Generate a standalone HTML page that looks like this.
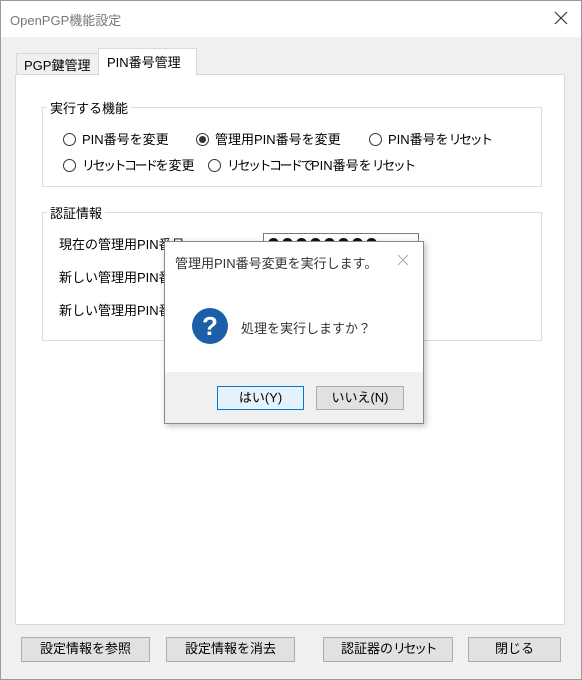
<!DOCTYPE html>
<html><head><meta charset="utf-8"><style>
*{box-sizing:border-box;margin:0;padding:0}
body{width:582px;height:680px;overflow:hidden;background:#f0f0f0;font-family:"Liberation Sans","Noto Sans CJK JP",sans-serif;font-size:13px;color:#000;position:relative}
.a{position:absolute}
.win{left:0;top:0;width:582px;height:680px;border:1px solid #9a9a9a}
.title{left:1px;top:1px;width:580px;height:36px;background:#fff}
.tt{left:10px;top:10px;color:#777;font-size:13px}
.grp{border:1px solid #dcdcdc;background:#fff}
.lg{background:#fff;padding:0 3px;font-size:13px}
.rb{display:inline-block;width:13px;height:13px;border:1px solid #333;border-radius:50%;vertical-align:-2px;margin-right:6px;position:relative;background:#fff}
.rb.on::after{content:"";position:absolute;left:2px;top:2px;width:7px;height:7px;border-radius:50%;background:#333}
.btn{border:1px solid #adadad;background:#e1e1e1;text-align:center;line-height:22px;font-size:13px}
.k{letter-spacing:-2.5px}
.dot{position:absolute;top:4px;width:11px;height:11px;border-radius:50%;background:#111}
</style></head><body>
<div class="a win"></div>
<div class="a title"></div>
<div class="a tt">OpenPGP機能設定</div>
<svg class="a" style="left:554px;top:11px" width="14" height="14"><path d="M1 1L13 13M13 1L1 13" stroke="#333" stroke-width="1.2"/></svg>
<!-- tabs -->
<div class="a" style="left:16px;top:53px;width:83px;height:22px;border:1px solid #d9d9d9;border-bottom:none;background:#f0f0f0"></div>
<div class="a" style="left:24px;top:55px">PGP鍵管理</div>
<div class="a" style="left:15px;top:74px;width:550px;height:551px;background:#fff;border:1px solid #d9d9d9"></div>
<div class="a" style="left:98px;top:48px;width:99px;height:28px;background:#fff;border:1px solid #d9d9d9;border-bottom:none"></div>
<div class="a" style="left:107px;top:52px">PIN番号管理</div>
<!-- group1 -->
<div class="a grp" style="left:42px;top:107px;width:500px;height:80px"></div>
<div class="a lg" style="left:47px;top:98px">実行する機能</div>
<div class="a" style="left:63px;top:129px"><span class="rb"></span>PIN番号を変更</div>
<div class="a" style="left:196px;top:129px"><span class="rb on"></span>管理用PIN番号を変更</div>
<div class="a" style="left:369px;top:129px"><span class="rb"></span>PIN番号を<span class="k">リセット</span></div>
<div class="a" style="left:63px;top:155px"><span class="rb"></span><span class="k">リセットコード</span>を変更</div>
<div class="a" style="left:208px;top:155px"><span class="rb"></span><span class="k">リセットコードで</span>PIN番号を<span class="k">リセット</span></div>
<!-- group2 -->
<div class="a grp" style="left:42px;top:212px;width:500px;height:129px"></div>
<div class="a lg" style="left:47px;top:203px">認証情報</div>
<div class="a" style="left:59px;top:234px">現在の管理用PIN番号</div>
<div class="a" style="left:59px;top:267px">新しい管理用PIN番号</div>
<div class="a" style="left:59px;top:300px">新しい管理用PIN番号</div>
<div class="a" style="left:263px;top:233px;width:156px;height:22px;border:1px solid #7a7a7a;background:#fff">
 <div class="dot" style="left:4px"></div><div class="dot" style="left:18px"></div><div class="dot" style="left:32px"></div><div class="dot" style="left:46px"></div><div class="dot" style="left:60px"></div><div class="dot" style="left:74px"></div><div class="dot" style="left:88px"></div><div class="dot" style="left:102px"></div>
</div>
<!-- dialog -->
<div class="a" style="left:164px;top:241px;width:260px;height:183px;background:#fff;border:1px solid #888;box-shadow:2px 2px 6px rgba(0,0,0,.25)">
 <div class="a" style="left:0;top:130px;width:258px;height:51px;background:#f0f0f0"></div>
 <div class="a" style="left:10px;top:11px;font-size:13px;color:#333">管理用PIN番号変更を実行します。</div>
 <svg class="a" style="left:232px;top:12px" width="12" height="12"><path d="M1 1L11 11M11 1L1 11" stroke="#aaa" stroke-width="1"/></svg>
 <div class="a" style="left:27px;top:66px;width:36px;height:36px;border-radius:50%;background:#1c5fa8;color:#fff;font-size:26px;line-height:36px;text-align:center;font-weight:bold">?</div>
 <div class="a" style="left:76px;top:76px;color:#333">処理を実行しますか？</div>
 <div class="a btn" style="left:52px;top:144px;width:87px;height:24px;border-color:#0078d7;background:#e5f1fb">はい(Y)</div>
 <div class="a btn" style="left:151px;top:144px;width:88px;height:24px">いいえ(N)</div>
</div>
<!-- bottom buttons -->
<div class="a btn" style="left:21px;top:637px;width:129px;height:25px">設定情報を参照</div>
<div class="a btn" style="left:166px;top:637px;width:129px;height:25px">設定情報を消去</div>
<div class="a btn" style="left:323px;top:637px;width:130px;height:25px">認証器の<span class="k">リセット</span></div>
<div class="a btn" style="left:468px;top:637px;width:93px;height:25px">閉じる</div>
</body></html>
